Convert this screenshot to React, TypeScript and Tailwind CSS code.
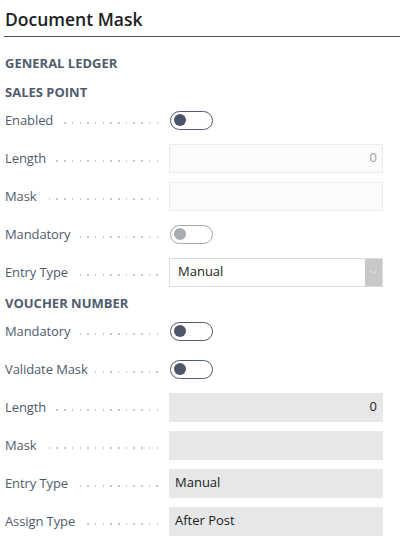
import React from 'react';

const font = { fontFamily: '"Open Sans", "Noto Sans", Arial, sans-serif' };

const Label: React.FC<{ text: string }> = ({ text }) => (
  <div className="flex items-center w-[169px] pr-[11px] pl-[5px] pt-[2px] shrink-0">
    <span className="text-[13px] text-[#505c6d] whitespace-nowrap tracking-[-0.1px]">{text}</span>
    <div className="flex-1 ml-[6px] mt-[3px] h-[2px] bg-[repeating-linear-gradient(to_left,#c6c8cc_0_1.5px,transparent_1.5px_7.7px)]" />
  </div>
);

const Row: React.FC<{ label: string; children: React.ReactNode }> = ({ label, children }) => (
  <div className="flex items-center h-[38px]">
    <Label text={label} />
    <div className="flex-1 pr-[17px]">{children}</div>
  </div>
);

const Toggle: React.FC<{ disabled?: boolean }> = ({ disabled }) => (
  <div
    className={
      disabled
        ? 'ml-px w-[43px] h-[19px] rounded-full border border-[#a2a6ad] flex items-center'
        : 'ml-px w-[43px] h-[19px] rounded-full border border-[#505c6d] flex items-center'
    }
  >
    <div
      className={
        disabled
          ? 'ml-[3px] w-[12px] h-[12px] rounded-full bg-[#a9acb3]'
          : 'ml-[3px] w-[12px] h-[12px] rounded-full bg-[#4c5669]'
      }
    />
  </div>
);

const SectionHeader: React.FC<{ text: string }> = ({ text }) => (
  <div className="h-[21px] flex items-center pt-[4px] pl-[5px] text-[13px] font-bold text-[#505c6d]">
    {text}
  </div>
);

export default function App() {
  return (
    <div className="w-[400px] h-[546px] bg-white overflow-hidden" style={font}>
      <div className="ml-[4px] h-[37px] border-b border-[#505257] flex items-end pb-[5px]">
        <h1 className="pl-px text-[17.5px] font-semibold text-[#212121] leading-[24px]">Document Mask</h1>
      </div>

      <div className="pt-[14px]">
        <SectionHeader text="GENERAL LEDGER" />
        <div className="h-[8px]" />
        <SectionHeader text="SALES POINT" />

        <Row label="Enabled">
          <Toggle />
        </Row>
        <Row label="Length">
          <div className="h-[29px] border border-[#ebebeb] bg-[#fbfbfb] flex items-center justify-end pr-[5px] text-[13px] text-[#a0a0a0]">
            0
          </div>
        </Row>
        <Row label="Mask">
          <div className="h-[29px] border border-[#ebebeb] bg-[#fbfbfb]" />
        </Row>
        <Row label="Mandatory">
          <Toggle disabled />
        </Row>
        <Row label="Entry Type">
          <div className="h-[29px] border border-[#dcdcdc] bg-white flex items-stretch">
            <div className="flex-1 flex items-center pl-[8px] text-[13px] text-[#212121]">Manual</div>
            <div className="w-[17px] bg-[#c8c8c8] flex items-center justify-center">
              <svg width="9" height="6" viewBox="0 0 9 6" fill="none">
                <path d="M1 1.5 L4.5 4.5 L8 1.5" stroke="#e4e4e4" strokeWidth="1" />
              </svg>
            </div>
          </div>
        </Row>

        <SectionHeader text="VOUCHER NUMBER" />

        <Row label="Mandatory">
          <Toggle />
        </Row>
        <Row label="Validate Mask">
          <Toggle />
        </Row>
        <Row label="Length">
          <div className="h-[29px] bg-[#e6e7e8] flex items-center justify-end pr-[6px] text-[13px] text-[#212121]">
            0
          </div>
        </Row>
        <Row label="Mask">
          <div className="h-[29px] bg-[#e6e7e8]" />
        </Row>
        <Row label="Entry Type">
          <div className="h-[29px] bg-[#e6e7e8] flex items-center pl-[6px] text-[13px] text-[#212121]">Manual</div>
        </Row>
        <Row label="Assign Type">
          <div className="h-[29px] bg-[#e6e7e8] flex items-center pl-[6px] text-[13px] text-[#212121]">After Post</div>
        </Row>
      </div>
    </div>
  );
}
